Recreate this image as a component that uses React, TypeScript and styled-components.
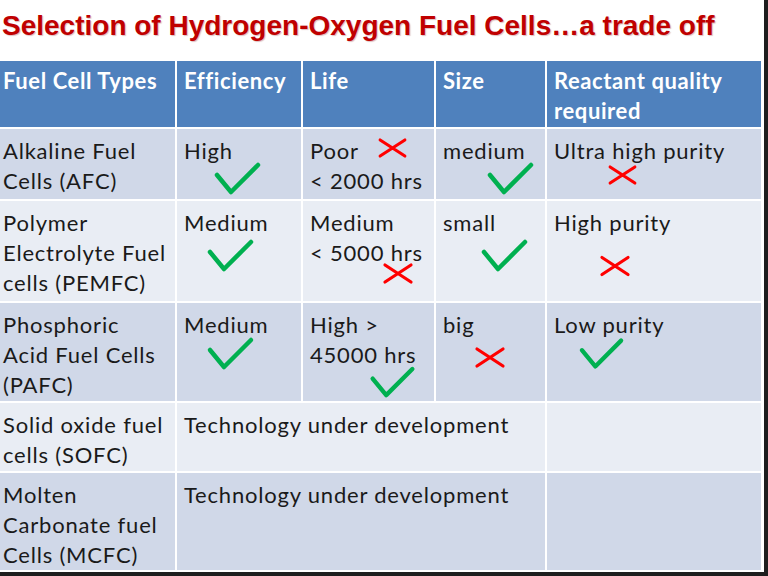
import React from "react";
import styled, { createGlobalStyle } from "styled-components";

const GlobalStyle = createGlobalStyle`
  html, body {
    margin: 0;
    padding: 0;
    background: #ffffff;
  }
`;

const Slide = styled.div`
  width: 764px;
  height: 572px;
  background: #ffffff;
  border-right: 4px solid #1e1e1e;
  border-bottom: 4px solid #1e1e1e;
  overflow: hidden;
  display: flex;
  flex-direction: column;
`;

const Title = styled.h1`
  margin: 0;
  height: 61px;
  padding: 10px 0 0 2px;
  box-sizing: border-box;
  font-family: "Liberation Sans", Arial, sans-serif;
  font-weight: bold;
  font-size: 28px;
  line-height: 32px;
  color: #c00000;
  white-space: nowrap;
  text-shadow: 1px 1px 1px rgba(120, 0, 0, 0.25);
`;

const Table = styled.div`
  display: grid;
  grid-template-columns: 175px 124px 131px 109px 214px;
  grid-template-rows: 66px 70px 100px 98px 68px 97px;
  gap: 2px;
  width: 761px;
  background: #ffffff;
`;

const HeadCell = styled.div<{ $first?: boolean }>`
  background: #4f81bd;
  color: #ffffff;
  font-family: Lato, "Open Sans", sans-serif;
  font-weight: bold;
  font-size: 22px;
  letter-spacing: 0.6px;
  line-height: 30px;
  padding: 5px 4px 0 ${({ $first }) => ($first ? "3px" : "7px")};
`;

const Cell = styled.div<{ $odd: boolean; $first?: boolean; $span?: number }>`
  position: relative;
  background: ${({ $odd }) => ($odd ? "#d0d8e8" : "#e9edf4")};
  color: #1a1a1a;
  font-family: Lato, "Open Sans", sans-serif;
  font-size: 22px;
  letter-spacing: 0.8px;
  line-height: 30px;
  white-space: nowrap;
  padding: 7px 4px 0 ${({ $first }) => ($first ? "3px" : "7px")};
  grid-column: ${({ $span }) => ($span ? `span ${$span}` : "auto")};
`;

const Mark = styled.svg<{ $x: number; $y: number }>`
  position: absolute;
  left: ${({ $x }) => $x}px;
  top: ${({ $y }) => $y}px;
  overflow: visible;
`;

const Check = ({ x, y, w = 45, h = 32 }: { x: number; y: number; w?: number; h?: number }) => (
  <Mark $x={x} $y={y} width={w} height={h} viewBox="0 0 45 32">
    <polyline
      points="2,12 16,29 43,2"
      fill="none"
      stroke="#00b050"
      strokeWidth="4.5"
      strokeLinecap="round"
      strokeLinejoin="round"
    />
  </Mark>
);

const Cross = ({ x, y, w = 30, h = 21 }: { x: number; y: number; w?: number; h?: number }) => (
  <Mark $x={x} $y={y} width={w} height={h} viewBox="0 0 30 21">
    <path d="M2 2 L28 19 M28 2 L2 19" fill="none" stroke="#ff0000" strokeWidth="3.2" strokeLinecap="round" />
  </Mark>
);

const App = () => {
  return (
    <>
      <GlobalStyle />
      <Slide>
        <Title>Selection of Hydrogen-Oxygen Fuel Cells…a trade off</Title>
        <Table>
          <HeadCell $first>Fuel Cell Types</HeadCell>
          <HeadCell>Efficiency</HeadCell>
          <HeadCell>Life</HeadCell>
          <HeadCell>Size</HeadCell>
          <HeadCell>Reactant quality<br />required</HeadCell>

          <Cell $odd $first>Alkaline Fuel<br />Cells (AFC)</Cell>
          <Cell $odd>High<Check x={38} y={34} /></Cell>
          <Cell $odd>Poor<br />&lt; 2000 hrs<Cross x={75} y={9} w={29} h={20} /></Cell>
          <Cell $odd>medium<Check x={52} y={34} /></Cell>
          <Cell $odd>Ultra high purity<Cross x={60} y={36} w={31} h={20} /></Cell>

          <Cell $odd={false} $first>Polymer<br />Electrolyte Fuel<br />cells (PEMFC)</Cell>
          <Cell $odd={false}>Medium<Check x={31} y={39} /></Cell>
          <Cell $odd={false}>Medium<br />&lt; 5000 hrs<Cross x={80} y={61} h={23} /></Cell>
          <Cell $odd={false}>small<Check x={46} y={39} /></Cell>
          <Cell $odd={false}>High purity<Cross x={53} y={54} h={22} /></Cell>

          <Cell $odd $first>Phosphoric<br />Acid Fuel Cells<br />(PAFC)</Cell>
          <Cell $odd>Medium<Check x={31} y={35} /></Cell>
          <Cell $odd>High &gt;<br />45000 hrs<Check x={67} y={64} h={31} /></Cell>
          <Cell $odd>big<Cross x={39} y={44} /></Cell>
          <Cell $odd>Low purity<Check x={33} y={35} w={43} /></Cell>

          <Cell $odd={false} $first>Solid oxide fuel<br />cells (SOFC)</Cell>
          <Cell $odd={false} $span={3}>Technology under development</Cell>
          <Cell $odd={false} />

          <Cell $odd $first>Molten<br />Carbonate fuel<br />Cells (MCFC)</Cell>
          <Cell $odd $span={3}>Technology under development</Cell>
          <Cell $odd />
        </Table>
      </Slide>
    </>
  );
};

export default App;
